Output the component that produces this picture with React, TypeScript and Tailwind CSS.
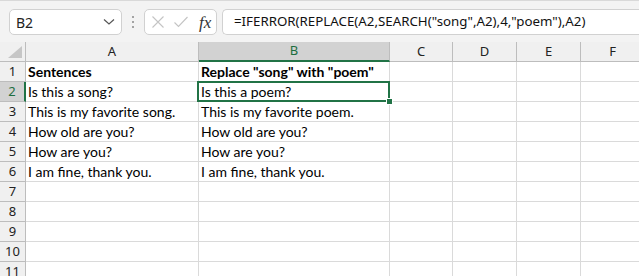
import React from "react";

const cols = [
  { key: "A", w: 173 },
  { key: "B", w: 191 },
  { key: "C", w: 63 },
  { key: "D", w: 64 },
  { key: "E", w: 64 },
  { key: "F", w: 64 },
];

const rows: [string, string][] = [
  ["Sentences", 'Replace "song" with "poem"'],
  ["Is this a song?", "Is this a poem?"],
  ["This is my favorite song.", "This is my favorite poem."],
  ["How old are you?", "How old are you?"],
  ["How are you?", "How are you?"],
  ["I am fine, thank you.", "I am fine, thank you."],
  ["", ""],
  ["", ""],
  ["", ""],
  ["", ""],
  ["", ""],
];

const uiFont = { fontFamily: '"Noto Sans", "Open Sans", sans-serif' };
const cellFont = { fontFamily: 'Lato, "Liberation Sans", sans-serif' };

export default function App() {
  return (
    <div className="w-[639px] h-[276px] overflow-hidden bg-white">
      {/* Formula bar */}
      <div
        className="h-[42px] bg-[#f3f3f3] border-t border-[#d9d9d9] flex items-start pt-[8px] pl-[9px]"
        style={uiFont}
      >
        <div className="w-[113px] h-[26px] bg-white border border-[#d1d1d1] rounded-[5px] flex items-center justify-between pl-[6px] pr-[6px]">
          <span className="text-[14px] text-[#222]">B2</span>
          <svg width="12" height="8" viewBox="0 0 12 8">
            <path d="M1 1.5 L6 6 L11 1.5" fill="none" stroke="#555" strokeWidth="1.2" />
          </svg>
        </div>
        <div className="w-[22px] h-[26px] flex flex-col items-center justify-center gap-[3px]">
          <span className="w-[2px] h-[2px] bg-[#888] rounded-full" />
          <span className="w-[2px] h-[2px] bg-[#888] rounded-full" />
          <span className="w-[2px] h-[2px] bg-[#888] rounded-full" />
        </div>
        <div className="w-[73px] h-[26px] bg-white border border-[#d1d1d1] rounded-[5px] flex items-center pl-[6px] gap-[8px]">
          <svg width="14" height="14" viewBox="0 0 14 14">
            <path d="M1.5 1.5 L12.5 12.5 M12.5 1.5 L1.5 12.5" stroke="#c4c4c4" strokeWidth="1.1" fill="none" />
          </svg>
          <svg width="16" height="14" viewBox="0 0 16 14">
            <path d="M1.5 7.5 L5.5 11.5 L14.5 2" stroke="#c4c4c4" strokeWidth="1.1" fill="none" />
          </svg>
          <span
            className="text-[17px] italic text-[#333] leading-none ml-[2px]"
            style={{ fontFamily: '"Liberation Serif", serif' }}
          >
            fx
          </span>
        </div>
        <div className="flex-1 h-[26px] ml-[5px] bg-white border border-[#d1d1d1] border-r-0 rounded-l-[5px] flex items-center pl-[11px]">
          <span className="text-[13.3px] text-[#111] whitespace-nowrap">
            =IFERROR(REPLACE(A2,SEARCH("song",A2),4,"poem"),A2)
          </span>
        </div>
      </div>

      {/* Column headers */}
      <div className="flex h-[20px]" style={uiFont}>
        <div className="w-[26px] shrink-0 h-full bg-[#f0f0f0] border-r border-b border-[#bdbdbd] relative">
          <svg className="absolute right-[3px] bottom-[3px]" width="14" height="12" viewBox="0 0 14 12">
            <path d="M14 0 L14 12 L0 12 Z" fill="#c6c6c6" />
          </svg>
        </div>
        {cols.map((c) =>
          c.key === "B" ? (
            <div
              key={c.key}
              style={{ width: c.w }}
              className="shrink-0 h-full bg-[#d2d2d2] border-r border-[#bdbdbd] border-b-2 border-b-[#217346] flex items-center justify-center text-[13px] text-[#1e6e3f]"
            >
              {c.key}
            </div>
          ) : (
            <div
              key={c.key}
              style={{ width: c.w }}
              className="shrink-0 h-full bg-[#f0f0f0] border-r border-b border-[#bdbdbd] flex items-center justify-center text-[13px] text-[#222]"
            >
              {c.key}
            </div>
          )
        )}
      </div>

      {/* Rows */}
      {rows.map((r, i) => {
        const n = i + 1;
        const active = n === 2;
        return (
          <div key={n} className={`flex h-[20px] relative ${active ? "z-10" : ""}`}>
            <div
              style={uiFont}
              className={
                active
                  ? "w-[26px] shrink-0 h-full bg-[#d2d2d2] border-b border-[#bdbdbd] border-r-2 border-r-[#217346] flex items-center justify-center text-[13px] text-[#1e6e3f]"
                  : "w-[26px] shrink-0 h-full bg-[#f0f0f0] border-r border-b border-[#bdbdbd] flex items-center justify-center text-[13px] text-[#222]"
              }
            >
              {n}
            </div>
            {cols.map((c, j) => {
              const text = j === 0 ? r[0] : j === 1 ? r[1] : "";
              const selected = active && c.key === "B";
              return (
                <div
                  key={c.key}
                  style={{ width: c.w, ...cellFont }}
                  className={`shrink-0 h-full border-r border-b border-[#dadada] flex items-center pl-[2px] text-[14px] text-black whitespace-nowrap relative ${
                    n === 1 ? "font-bold" : ""
                  } ${selected ? "z-10" : ""}`}
                >
                  {selected && (
                    <div className="absolute left-[-2px] top-[-1px] right-[-1px] bottom-[-1px] border-2 border-[#217346] pointer-events-none">
                      <div className="absolute right-[-5px] bottom-[-5px] w-[7px] h-[7px] bg-[#217346] border border-white" />
                    </div>
                  )}
                  <span className="relative">{text}</span>
                </div>
              );
            })}
          </div>
        );
      })}
    </div>
  );
}
